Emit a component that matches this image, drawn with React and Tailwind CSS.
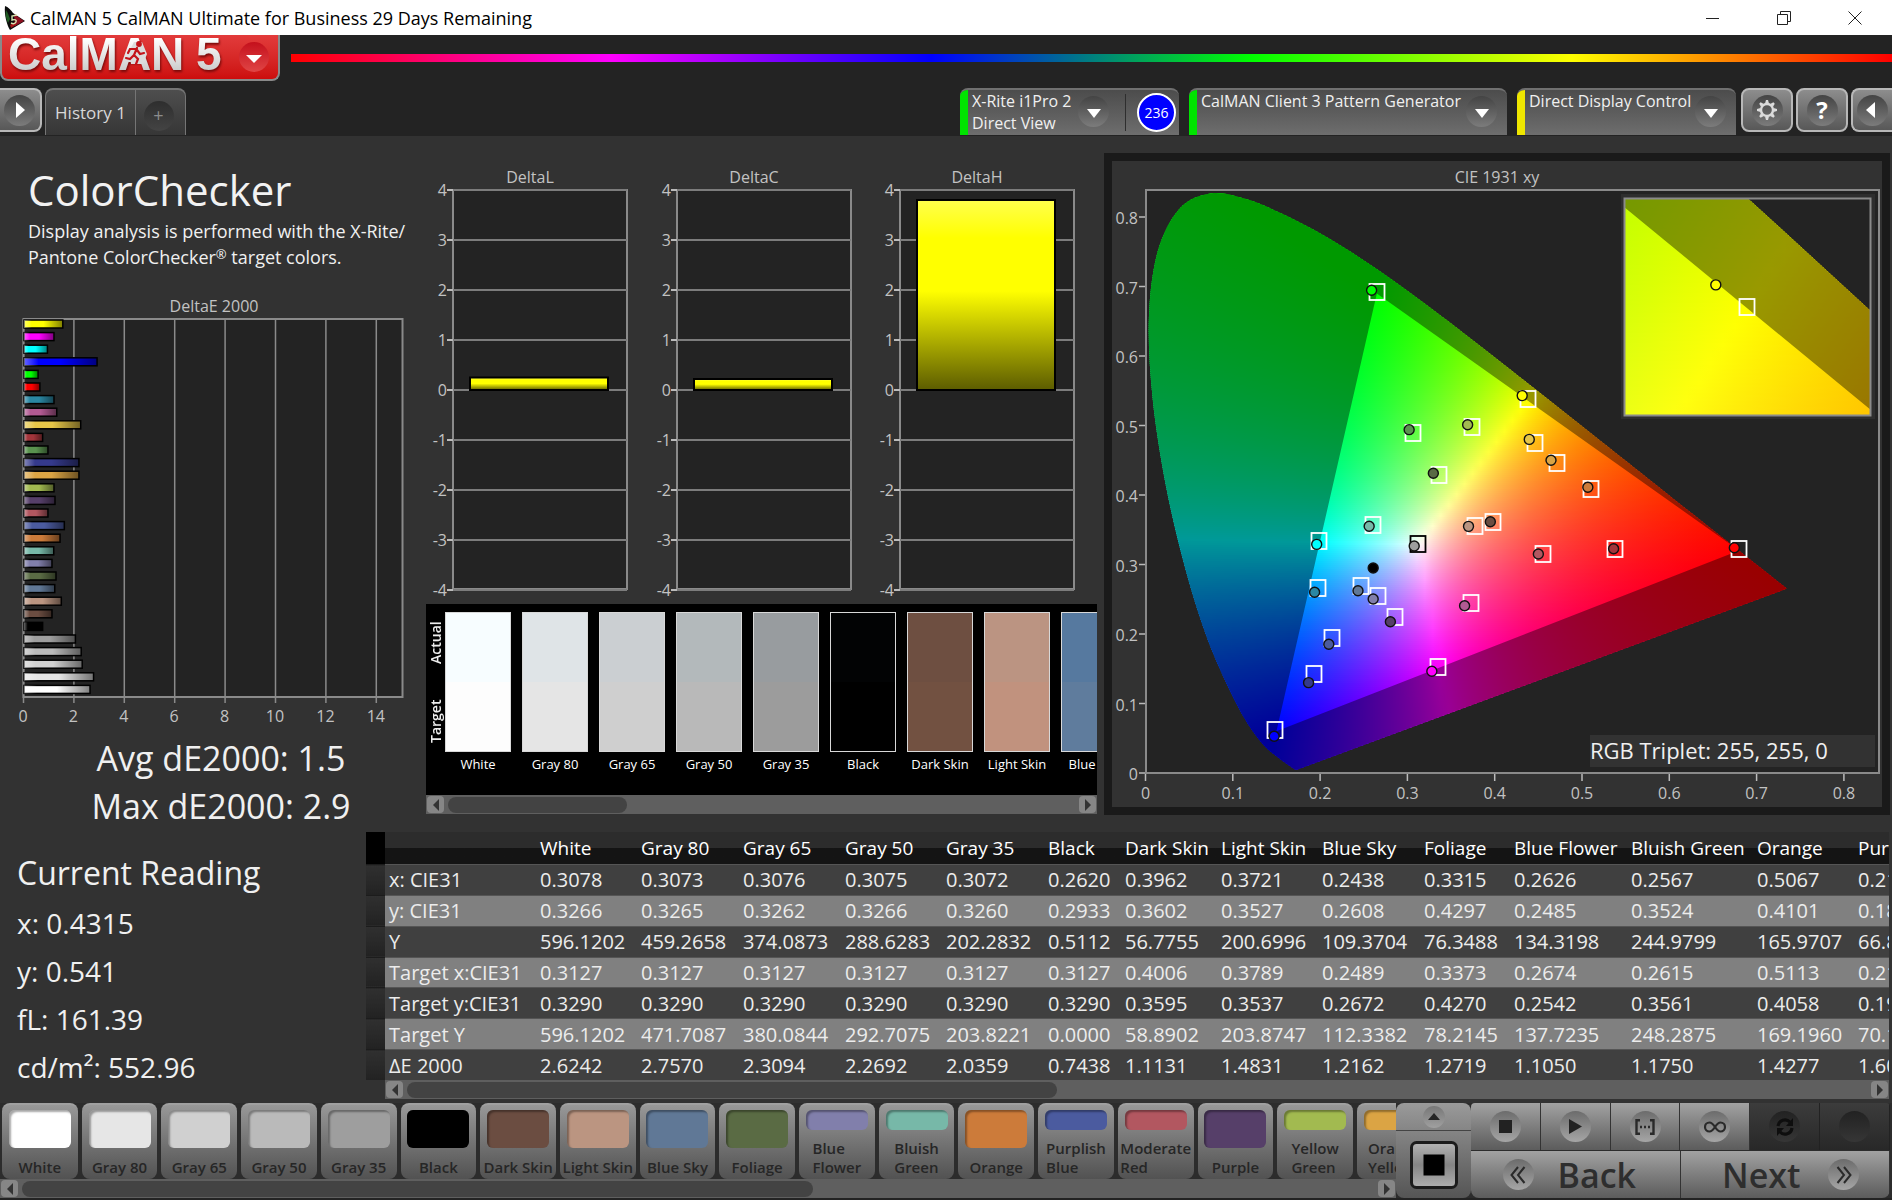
import { useMemo } from "react";

const PATCHES = [
  { name: "White", color: "#ffffff", actual: "#f7fdff", target: "#fdfdfd", de: 2.62 },
  { name: "Gray 80", color: "#e6e6e6", actual: "#dfe4e7", target: "#e5e5e5", de: 2.76 },
  { name: "Gray 65", color: "#d0d0d0", actual: "#cbcfd2", target: "#cfcfcf", de: 2.31 },
  { name: "Gray 50", color: "#bababa", actual: "#b3b9bb", target: "#b9b9b9", de: 2.27 },
  { name: "Gray 35", color: "#9e9e9e", actual: "#989c9f", target: "#9c9c9c", de: 2.04 },
  { name: "Black", color: "#000000", actual: "#020304", target: "#000000", de: 0.74 },
  { name: "Dark Skin", color: "#6b4d41", actual: "#6e4f41", target: "#725141", de: 1.11 },
  { name: "Light Skin", color: "#bb9581", actual: "#bb9482", target: "#c1927e", de: 1.48 },
  { name: "Blue Sky", color: "#607896", actual: "#56799f", target: "#5f7c9d", de: 1.22 },
  { name: "Foliage", color: "#5a6b44", de: 1.27 },
  { name: "Blue Flower", lines: ["Blue", "Flower"], color: "#817fab", de: 1.11 },
  { name: "Bluish Green", lines: ["Bluish", "Green"], color: "#77b8a8", de: 1.18 },
  { name: "Orange", color: "#cc7b3a", de: 1.43 },
  { name: "Purplish Blue", lines: ["Purplish", "Blue"], color: "#4b5b9f", de: 1.6 },
  { name: "Moderate Red", lines: ["Moderate", "Red"], color: "#b25760", de: 0.95 },
  { name: "Purple", color: "#563f69", de: 1.23 },
  { name: "Yellow Green", lines: ["Yellow", "Green"], color: "#a2ba50", de: 1.19 },
  { name: "Orange Yellow", lines: ["Orange", "Yellow"], color: "#dba444", de: 2.18 },
  { name: "Blue", color: "#353a8c", de: 2.18 },
  { name: "Green", color: "#5a934f", de: 0.95 },
  { name: "Red", color: "#a3353b", de: 0.74 },
  { name: "Yellow", color: "#e6c648", de: 2.25 },
  { name: "Magenta", color: "#b25a92", de: 1.3 },
  { name: "Cyan", color: "#2a87a3", de: 1.19 },
  { name: "100% Red", color: "#ff0000", de: 0.63 },
  { name: "100% Green", color: "#00ff00", de: 0.56 },
  { name: "100% Blue", color: "#0000ff", de: 2.9 },
  { name: "100% Cyan", color: "#00ffff", de: 0.93 },
  { name: "100% Magenta", color: "#ff00ff", de: 1.19 },
  { name: "100% Yellow", color: "#ffff00", de: 1.54 },
];

const COLUMNS = [
  ["White", "0.3078", "0.3266", "596.1202", "0.3127", "0.3290", "596.1202", "2.6242"],
  ["Gray 80", "0.3073", "0.3265", "459.2658", "0.3127", "0.3290", "471.7087", "2.7570"],
  ["Gray 65", "0.3076", "0.3262", "374.0873", "0.3127", "0.3290", "380.0844", "2.3094"],
  ["Gray 50", "0.3075", "0.3266", "288.6283", "0.3127", "0.3290", "292.7075", "2.2692"],
  ["Gray 35", "0.3072", "0.3260", "202.2832", "0.3127", "0.3290", "203.8221", "2.0359"],
  ["Black", "0.2620", "0.2933", "0.5112", "0.3127", "0.3290", "0.0000", "0.7438"],
  ["Dark Skin", "0.3962", "0.3602", "56.7755", "0.4006", "0.3595", "58.8902", "1.1131"],
  ["Light Skin", "0.3721", "0.3527", "200.6996", "0.3789", "0.3537", "203.8747", "1.4831"],
  ["Blue Sky", "0.2438", "0.2608", "109.3704", "0.2489", "0.2672", "112.3382", "1.2162"],
  ["Foliage", "0.3315", "0.4297", "76.3488", "0.3373", "0.4270", "78.2145", "1.2719"],
  ["Blue Flower", "0.2626", "0.2485", "134.3198", "0.2674", "0.2542", "137.7235", "1.1050"],
  ["Bluish Green", "0.2567", "0.3524", "244.9799", "0.2615", "0.3561", "248.2875", "1.1750"],
  ["Orange", "0.5067", "0.4101", "165.9707", "0.5113", "0.4058", "169.1960", "1.4277"],
  ["Purplish Blue", "0.2100", "0.1852", "66.8214", "0.2134", "0.1942", "70.1120", "1.6035"],
];
const COLUMN_WIDTHS = [
  "w-[101px]", "w-[102px]", "w-[102px]", "w-[101px]", "w-[102px]", "w-[77px]", "w-[96px]",
  "w-[101px]", "w-[102px]", "w-[90px]", "w-[117px]", "w-[126px]", "w-[101px]", "w-[130px]",
];
const ROW_LABELS = ["x: CIE31", "y: CIE31", "Y", "Target x:CIE31", "Target y:CIE31", "Target Y", "ΔE 2000"];

/* [actual x, actual y, target x, target y, fill] */
const MARKERS = [
  [0.259, 0.6945, 0.265, 0.692, "#00ff00"],
  [0.4315, 0.543, 0.438, 0.538, "#ffff00"],
  [0.302, 0.494, 0.3064, 0.4892, "#5a934f"],
  [0.369, 0.501, 0.374, 0.498, "#a2ba50"],
  [0.4396, 0.48, 0.4466, 0.4753, "#e6c648"],
  [0.4645, 0.45, 0.4714, 0.4456, "#dba444"],
  [0.3297, 0.4312, 0.3366, 0.4288, "#5a6b44"],
  [0.5067, 0.4111, 0.5103, 0.4082, "#cc7b3a"],
  [0.2562, 0.355, 0.2608, 0.3568, "#77b8a8"],
  [0.1961, 0.329, 0.199, 0.334, "#00ffff"],
  [0.37, 0.3549, 0.377, 0.3549, "#bb9581"],
  [0.395, 0.3615, 0.3985, 0.3615, "#6b4d41"],
  [0.45, 0.3151, 0.4553, 0.3156, "#b25760"],
  [0.5362, 0.3227, 0.5378, 0.3219, "#a3353b"],
  [0.6745, 0.3242, 0.68, 0.3223, "#ff0000"],
  [0.1937, 0.26, 0.1972, 0.2662, "#2a87a3"],
  [0.2434, 0.2623, 0.2468, 0.2691, "#607896"],
  [0.2608, 0.2504, 0.2667, 0.2547, "#817fab"],
  [0.2805, 0.2177, 0.2858, 0.2245, "#563f69"],
  [0.3655, 0.2407, 0.3731, 0.245, "#b25a92"],
  [0.21, 0.1852, 0.2134, 0.1942, "#4b5b9f"],
  [0.1868, 0.13, 0.1925, 0.143, "#353a8c"],
  [0.328, 0.1463, 0.335, 0.1525, "#ff00ff"],
  [0.1474, 0.0528, 0.148, 0.0623, "#0000ff"],
];

const LOCUS = [
  [0.1741, 0.005], [0.1714, 0.0051], [0.1689, 0.0069], [0.1644, 0.0109], [0.1566, 0.0177], [0.144, 0.0297],
  [0.1355, 0.0399], [0.1241, 0.0578], [0.1096, 0.0868], [0.0913, 0.1327], [0.0687, 0.2007], [0.0454, 0.295],
  [0.0235, 0.4127], [0.0082, 0.5384], [0.0039, 0.6548], [0.0139, 0.7502], [0.0389, 0.812], [0.0743, 0.8338],
  [0.1142, 0.8262], [0.1547, 0.8059], [0.1929, 0.7816], [0.2296, 0.7543], [0.2658, 0.7243], [0.3016, 0.6923],
  [0.3373, 0.6589], [0.3731, 0.6245], [0.4441, 0.5547], [0.5125, 0.4866], [0.5752, 0.4242], [0.627, 0.3725],
  [0.6915, 0.3083], [0.7347, 0.2653],
];
const GAMUT = [[0.68, 0.32], [0.265, 0.69], [0.15, 0.06]];

function chromaColor(x, y) {
  const X = x / y;
  const Z = (1 - x - y) / y;
  const rgb = [
    2.4935 * X - 0.9314 - 0.4027 * Z,
    -0.8295 * X + 1.7627 + 0.0236 * Z,
    0.0358 * X - 0.0762 + 0.9569 * Z,
  ].map((v) => Math.max(v, 0));
  const top = Math.max(...rgb);
  return `rgb(${rgb.map((v) => Math.round((v / top) * 255)).join(",")})`;
}

function strips(x0, x1, yTop, yBottom, count, stops) {
  return Array.from({ length: count }, (_, row) => {
    const y = yTop + ((yBottom - yTop) * (row + 0.5)) / count;
    const colors = Array.from({ length: stops + 1 }, (_, i) => chromaColor(x0 + ((x1 - x0) * i) / stops, Math.max(y, 0.001)));
    return `linear-gradient(to right, ${colors.join(",")})`;
  });
}

function smoothPath(pts) {
  let d = `M${pts[0][0]} ${pts[0][1]}`;
  for (let i = 0; i < pts.length - 1; i++) {
    const p0 = pts[Math.max(i - 1, 0)];
    const p1 = pts[i];
    const p2 = pts[i + 1];
    const p3 = pts[Math.min(i + 2, pts.length - 1)];
    d += `C${p1[0] + (p2[0] - p0[0]) / 6} ${p1[1] + (p2[1] - p0[1]) / 6} ${p2[0] - (p3[0] - p1[0]) / 6} ${p2[1] - (p3[1] - p1[1]) / 6} ${p2[0]} ${p2[1]}`;
  }
  return d + "Z";
}

function Scrollbar({ label, thumb }) {
  return (
    <div className="flex h-[19px] items-center bg-[#5f5f5f] p-px" role="group" aria-label={label}>
      <button aria-label="Scroll left" className="flex h-[17px] w-[17px] items-center justify-center rounded bg-[#868686]">
        <svg width="8" height="12" viewBox="0 0 8 12"><path d="M7 0v12L1 6z" fill="#333" /></svg>
      </button>
      <div className="mx-1 h-4 flex-1">
        <div className="h-4 rounded-full bg-[#434343]" style={{ width: `${thumb}%` }} />
      </div>
      <button aria-label="Scroll right" className="flex h-[17px] w-[17px] items-center justify-center rounded bg-[#868686]">
        <svg width="8" height="12" viewBox="0 0 8 12"><path d="M1 0v12l6-6z" fill="#333" /></svg>
      </button>
    </div>
  );
}

function TitleBar() {
  return (
    <div className="flex h-[35px] items-center bg-white pr-0.5 pl-1 text-[18px] text-black">
      <svg width="22" height="26" viewBox="0 0 22 26" className="shrink-0">
        <path d="M1 1C4 2 7 5 9 8l12 8L6 25C3 20 0 10 1 1z" fill="#0c0c0c" />
        <path d="M10 9l10 7-9 5z" fill="#8f1020" />
        <path d="M2 5c2 3 3 6 4 9l-2 4C2 14 1 9 2 5z" fill="#1f5a22" />
        <path d="M6 20l5-3 1 3-5 3z" fill="#a81418" />
        <path d="M13 10l-5 1v4c3-1 5 0 4 2s-3 2-5 1" fill="none" stroke="#d8e6b0" strokeWidth="1.4" />
      </svg>
      <span className="ml-1 flex-1 leading-6">CalMAN 5 CalMAN Ultimate for Business 29 Days Remaining</span>
      <button aria-label="Minimize" className="flex h-[35px] w-[71px] items-center justify-center">
        <svg width="14" height="14" viewBox="0 0 14 14"><path d="M0 7.5h13" stroke="#222" /></svg>
      </button>
      <button aria-label="Restore" className="flex h-[35px] w-[71px] items-center justify-center">
        <svg width="14" height="14" viewBox="0 0 14 14" fill="none" stroke="#222"><path d="M.5 3.5h10v10H.5zM3.500 3V.5h10v10H11" /></svg>
      </button>
      <button aria-label="Close" className="flex h-[35px] w-[71px] items-center justify-center">
        <svg width="14" height="14" viewBox="0 0 14 14" stroke="#222"><path d="M.5.5l13 13M13.500.5l-13 13" /></svg>
      </button>
    </div>
  );
}

function Brand() {
  return (
    <div className="flex h-[53px] items-start">
      <button aria-label="CalMAN 5 menu" className="flex h-[46px] w-[280px] shrink-0 rounded-b-lg border-x-2 border-b-2 border-[#8a8a8a] bg-linear-to-b from-[#e23b3b] to-[#cc0c0c]">
        <svg width="276" height="44" viewBox="0 0 276 44" className="shrink-0 overflow-visible">
          <defs>
            <linearGradient id="silver" x1="0" y1="0" x2="0" y2="1"><stop offset="0.2" stopColor="#fff" /><stop offset="1" stopColor="#bdbdbd" /></linearGradient>
            <linearGradient id="knob" x1="0" y1="0" x2="0" y2="1"><stop offset="0" stopColor="#c4101c" /><stop offset="1" stopColor="#e04545" /></linearGradient>
          </defs>
          <g fontFamily="'Liberation Sans',Arial,sans-serif" fontWeight="700" fontSize="46" fill="url(#silver)" className="[filter:drop-shadow(1px_2px_1px_#7a0a0a)]">
            <text x="6" y="35">CalMAN</text>
            <text x="194" y="35">5</text>
          </g>
          <path d="M127 17l5-10h8l5 12-4 10h-12z" fill="#dcdcdc" />
          <g fill="none" stroke="#c3141a" strokeWidth="2.200" strokeLinecap="round">
            <circle cx="137" cy="9" r="1.800" fill="#c3141a" />
            <path d="M135 13l-3 7 4 4-2 5M132 20l-4 4-4-1M134 14l-6 0-2 4M135 15l3 4 4-1" />
          </g>
          <circle cx="252" cy="22" r="15" fill="url(#knob)" />
          <path d="M244 20h16l-8 8z" fill="#fff" />
        </svg>
      </button>
      <div className="mt-[19px] ml-[11px] h-2 flex-1 bg-[linear-gradient(to_right,#f00,#f0f_20%,#00f_40%,#0f0_60%,#ff0_80%,#f00)]" />
    </div>
  );
}

function Knob({ children }) {
  return <span className="flex size-[31px] shrink-0 items-center justify-center rounded-full bg-linear-to-b from-[#444] to-[#7c7c7c]">{children}</span>;
}

const downArrow = <svg width="14" height="9" viewBox="0 0 14 9" className="mt-1"><path d="M0 0h14L7 9z" fill="#fff" /></svg>;

function Device({ lines, width, lamp, badge }) {
  return (
    <div className={`flex h-[47px] overflow-hidden rounded-t-lg border-t-2 border-[#707070] bg-linear-to-b from-[#4c4c4c] to-[#6e6e6e] ${width}`}>
      <div className={`w-2 shrink-0 ${lamp}`} />
      <button className={`flex flex-1 items-start pl-1 text-left text-[16px] leading-[22px] whitespace-nowrap text-[#f0f0f0] ${badge ? "pr-4" : "pr-2.5"}`}>
        <span className="flex-1">{lines.map((l) => <span key={l} className="block">{l}</span>)}</span>
        <span className="mt-1.5"><Knob>{downArrow}</Knob></span>
      </button>
      {badge && (
        <div className="my-1 flex w-[54px] items-center justify-center border-l border-[#2e2e2e] pl-2">
          <span className="flex size-[39px] items-center justify-center rounded-full border-2 border-white bg-[#0000ff] text-[14px] text-white">{badge}</span>
        </div>
      )}
    </div>
  );
}

const squareButton = "flex h-11 items-center justify-center rounded-lg border-2 border-[#b8b8b8] bg-linear-to-b from-[#8d8d8d] to-[#585858]";

function Tabs() {
  return (
    <div className="flex h-12 items-start">
      <button aria-label="Expand" className={`${squareButton} w-[42px] rounded-l-none border-l-0 pr-0.5`}>
        <Knob><svg width="9" height="16" viewBox="0 0 9 16" className="ml-0.5"><path d="M0 0l9 8-9 8z" fill="#fff" /></svg></Knob>
      </button>
      <div className="ml-[3px] flex h-[47px] w-[141px] overflow-hidden rounded-t-lg border-x border-t-2 border-[#757575] bg-linear-to-b from-[#4e4e4e] to-[#363636]">
        <button className="w-[90px] border-r border-[#757575] text-[17px] text-[#d8d8d8]">History 1</button>
        <button aria-label="Add tab" className="flex flex-1 items-center justify-center pr-1">
          <span className="mt-1.5 flex size-[30px] items-center justify-center rounded-full bg-linear-to-b from-[#2e2e2e] to-[#444] text-[18px] text-[#8c8c8c]">+</span>
        </button>
      </div>
      <div className="flex-1" />
      <Device lines={["X-Rite i1Pro 2", "Direct View"]} width="w-[219px]" lamp="bg-[#00e400]" badge="236" />
      <div className="w-2.5" />
      <Device lines={["CalMAN Client 3 Pattern Generator"]} width="w-[318px]" lamp="bg-[#00e400]" />
      <div className="w-2.5" />
      <Device lines={["Direct Display Control"]} width="w-[219px]" lamp="bg-[#efe600]" />
      <button aria-label="Settings" className={`${squareButton} ml-[5px] w-[52px]`}>
        <Knob>
          <svg width="22" height="22" viewBox="-11 -11 22 22">
            <circle r="6" fill="none" stroke="#dcdcdc" strokeWidth="2.400" />
            {[0, 45, 90, 135, 180, 225, 270, 315].map((a) => <path key={a} d="M-2-6.500l1-3.500h2l1 3.500z" fill="#dcdcdc" transform={`rotate(${a})`} />)}
          </svg>
        </Knob>
      </button>
      <button aria-label="Help" className={`${squareButton} ml-[3px] w-[52px]`}>
        <Knob><span className="text-[24px] leading-none font-bold text-white">?</span></Knob>
      </button>
      <button aria-label="Collapse" className={`${squareButton} ml-[3px] w-[41px] rounded-r-none border-r-0`}>
        <Knob><svg width="9" height="16" viewBox="0 0 9 16" className="mr-1"><path d="M9 0L0 8l9 8z" fill="#fff" /></svg></Knob>
      </button>
    </div>
  );
}

const chartFont = { fontFamily: "'Open Sans',sans-serif", fontSize: 16, fill: "#c2c2c2" };

function DeltaEChart() {
  const unit = 25.2;
  const bars = [...PATCHES].reverse();
  return (
    <svg viewBox="0 0 420 464" className="block w-full" role="img" aria-label="DeltaE 2000">
      <defs>
        <linearGradient id="sheenX">
          <stop offset="0" stopColor="#fff" stopOpacity="0.4" /><stop offset="0.2" stopColor="#fff" stopOpacity="0" />
          <stop offset="0.5" stopColor="#000" stopOpacity="0" /><stop offset="1" stopColor="#000" stopOpacity="0.5" />
        </linearGradient>
      </defs>
      <rect x="23.500" y="49" width="379" height="378" fill="#232323" stroke="#8a8a8a" strokeWidth="2" />
      {[0, 2, 4, 6, 8, 10, 12, 14].map((v) => (
        <g key={v}>
          <path d={`M${23.5 + v * unit} 49v384`} stroke="#8a8a8a" strokeWidth="1.500" />
          <text x={23 + v * unit} y="452" textAnchor="middle" {...chartFont}>{v}</text>
        </g>
      ))}
      {bars.map((b, i) => (
        <g key={b.name}>
          <rect x="24" y={50 + i * 12.6} width={b.de * unit} height="8" fill={b.color} stroke="#000" strokeWidth="1.500" />
          <rect x="24" y={50 + i * 12.6} width={b.de * unit} height="8" fill="url(#sheenX)" />
        </g>
      ))}
      <text x="214" y="42" textAnchor="middle" {...chartFont}>DeltaE 2000</text>
    </svg>
  );
}

function DeltaCharts() {
  const charts = [["DeltaL", 33, 0.25], ["DeltaC", 257, 0.22], ["DeltaH", 480, 3.8]];
  return (
    <svg viewBox="0 0 684 468" className="block w-full" role="img" aria-label="DeltaL, DeltaC and DeltaH">
      <defs>
        <linearGradient id="barY" x1="0" y1="0" x2="0" y2="1">
          <stop offset="0" stopColor="#ffff4d" /><stop offset="0.200" stopColor="#ffff00" />
          <stop offset="0.480" stopColor="#ffff00" /><stop offset="1" stopColor="#5c5c00" />
        </linearGradient>
      </defs>
      {charts.map(([name, x, value]) => (
        <g key={name}>
          <text x={x + 77} y="47" textAnchor="middle" {...chartFont}>{name}</text>
          <rect x={x} y="54" width="174" height="399" fill="#232323" stroke="#8a8a8a" strokeWidth="2" />
          {[4, 3, 2, 1, 0, -1, -2, -3, -4].map((v) => (
            <g key={v}>
              <path d={`M${x - 6} ${254 - v * 50}h180`} stroke="#7c7c7c" strokeWidth="2" />
              <path d={`M${x - 6} ${254 - v * 50}h6`} stroke="#bbb" strokeWidth="2" />
              <text x={x - 6} y={260 - v * 50} textAnchor="end" {...chartFont}>{v}</text>
            </g>
          ))}
          <rect x={x + 17} y={254 - value * 50} width="138" height={value * 50} fill="url(#barY)" stroke="#000" strokeWidth="2" />
        </g>
      ))}
    </svg>
  );
}

function PatchCompare() {
  return (
    <div className="mx-1.5 mr-[7px] overflow-hidden bg-black">
      <div className="flex h-[191px] overflow-hidden pt-2">
        <div className="flex w-[19px] shrink-0 flex-col text-[14px] leading-[19px] font-semibold text-[#eee]">
          <span className="flex h-[62px] rotate-180 items-center justify-center [writing-mode:vertical-rl]">Actual</span>
          <span className="mt-4 flex h-[62px] rotate-180 items-center justify-center [writing-mode:vertical-rl]">Target</span>
        </div>
        <ul className="flex gap-[11px]">
          {PATCHES.slice(0, 9).map((p) => (
            <li key={p.name} className="w-[66px] shrink-0 text-center text-[13px] whitespace-nowrap text-white">
              <div className="h-[140px] border border-[#d8d8d8]">
                <div className="h-1/2" style={{ background: p.actual }} />
                <div className="h-1/2" style={{ background: p.target }} />
              </div>
              <span className="block leading-6">{p.name}</span>
            </li>
          ))}
        </ul>
      </div>
      <Scrollbar label="Patches" thumb={28.5} />
    </div>
  );
}

function Target({ x, y, stroke = "#fff" }) {
  return <rect x={Math.round(x) - 7.5} y={Math.round(y) - 8} width="15" height="16" fill="none" stroke={stroke} strokeWidth="1.800" />;
}
function Dot({ x, y, fill }) {
  return <circle cx={x} cy={y} r="5" fill={fill} stroke="#111" strokeWidth="1.400" />;
}

function CieChart() {
  const px = (x) => 33.5 + 873 * x;
  const py = (y) => 612 - 695 * y;
  const ix = (x) => 635 + (x - 0.438) * 4800;
  const iy = (y) => 146 - (y - 0.536) * 4430;
  const main = useMemo(() => strips(0, 0.84, 0.84, 0, 292, 92), []);
  const inset = useMemo(() => strips(0.4125, 0.4635, 0.5605, 0.5115, 109, 20), []);
  const locus = smoothPath(LOCUS.map(([x, y]) => [px(x), py(y)]));
  const insetLocus = LOCUS.map(([x, y]) => `${ix(x)},${iy(y)}`).join(" ");
  const shade = (fx, fy, box) => `${box}M${GAMUT.map(([x, y]) => `${fx(x)} ${fy(y)}`).join("L")}Z`;
  return (
    <svg viewBox="0 0 770 646" className="block w-full bg-[#323232]" role="img" aria-label="CIE 1931 xy chromaticity chart">
      <defs>
        <clipPath id="locus"><path d={locus} /></clipPath>
        <clipPath id="insetBox"><rect x="513" y="38" width="245" height="216" /></clipPath>
        <clipPath id="insetLocus"><polygon points={insetLocus} /></clipPath>
      </defs>
      <text x="385" y="22" textAnchor="middle" {...chartFont}>CIE 1931 xy</text>
      <rect x="34" y="29" width="733" height="583" fill="#232323" stroke="#8a8a8a" strokeWidth="2" />
      <g clipPath="url(#locus)">
        <foreignObject x="33.500" y="28" width="733" height="585">
          {main.map((g, i) => <div key={i} className="-mb-px h-[3px]" style={{ background: g }} />)}
        </foreignObject>
        <path d={shade(px, py, "M0 0H770V646H0Z")} fillRule="evenodd" fill="#000" opacity="0.400" />
      </g>
      {[0, 1, 2, 3, 4, 5, 6, 7, 8].map((v) => (
        <g key={v}>
          <path d={`M${px(v / 10)} 613v7M27 ${py(v / 10)}h6`} stroke="#bbb" strokeWidth="1.500" />
          <text x={px(v / 10)} y="638" textAnchor="middle" {...chartFont}>{v / 10}</text>
          <text x="26" y={py(v / 10) + 7} textAnchor="end" {...chartFont}>{v / 10}</text>
        </g>
      ))}
      {MARKERS.map((m, i) => (
        <g key={i}><Target x={px(m[2])} y={py(m[3])} /><Dot x={px(m[0])} y={py(m[1])} fill={m[4]} /></g>
      ))}
      <Target x={px(0.3127)} y={py(0.329)} stroke="#000" />
      <Dot x={px(0.3078)} y={py(0.3266)} fill="#9e9e9e" />
      <Dot x={px(0.2608)} y={py(0.295)} fill="#000" />

      <rect x="509" y="33" width="254" height="225" fill="#2e2e2e" />
      <rect x="512" y="37" width="247" height="218" fill="#232323" />
      <g clipPath="url(#insetBox)">
        <g clipPath="url(#insetLocus)">
          <foreignObject x="513" y="38" width="245" height="220">
            {inset.map((g, i) => <div key={i} className="-mb-px h-[3px]" style={{ background: g }} />)}
          </foreignObject>
          <path d={shade(ix, iy, "M-4000-4000H6000V6000H-4000Z")} fillRule="evenodd" fill="#000" opacity="0.400" />
        </g>
      </g>
      <rect x="512.500" y="37.500" width="246" height="217" fill="none" stroke="#8a8a8a" strokeWidth="2" />
      <Dot x={ix(0.4315)} y={iy(0.541)} fill="#ffff00" />
      <Target x={ix(0.438)} y={iy(0.536)} />

      <rect x="478" y="574" width="285" height="32" fill="#323232" />
      <text x="478" y="598" fontFamily="'Open Sans',sans-serif" fontSize="22" fill="#f0f0f0">RGB Triplet: 255, 255, 0</text>
    </svg>
  );
}

function ReadingTable() {
  return (
    <div className="mr-[3px] min-w-0 overflow-hidden">
      <div className="overflow-hidden">
        <table className="h-[248px] w-[1617px] table-fixed border-collapse text-left text-[20px] whitespace-nowrap text-[#ececec]">
          <colgroup>
            <col className="w-[19px]" /><col className="w-[150px]" />
            {COLUMN_WIDTHS.map((w, i) => <col key={i} className={w} />)}
          </colgroup>
          <thead>
            <tr className="h-8 text-[19px] text-white">
              <td className="bg-black" />
              <td className="bg-linear-to-b from-[#2c2c2c] from-50% to-[#141414] to-50%" />
              {COLUMNS.map((c) => (
                <th key={c[0]} scope="col" className="bg-linear-to-b from-[#2c2c2c] from-50% to-[#141414] to-50% py-0 pl-[5px] leading-8 font-normal">{c[0]}</th>
              ))}
            </tr>
          </thead>
          <tbody>
            {ROW_LABELS.map((label, r) => (
              <tr key={label} className="border-t border-[#555] odd:bg-[#404040] even:bg-[#808080]">
                <td className="border-t border-[#1c1c1c] bg-linear-to-b from-[#303030] to-[#222] p-0" />
                <th scope="row" className="py-0 pl-1 leading-[29px] font-normal">{label}</th>
                {COLUMNS.map((c) => <td key={c[0]} className="py-0 pl-[5px] leading-[29px]">{c[r + 1]}</td>)}
              </tr>
            ))}
          </tbody>
        </table>
      </div>
      <div className="ml-[19px]"><Scrollbar label="Readings" thumb={44.5} /></div>
    </div>
  );
}

function PatchBar() {
  return (
    <div className="min-w-0 overflow-hidden bg-[#2c2c2c]">
      <div className="flex h-[76px] overflow-hidden">
        {PATCHES.slice(0, 18).map((p) => (
          <div key={p.name} className="w-[5.71%] shrink-0 px-0.5">
            <button className="flex h-[76px] w-full flex-col items-center justify-between overflow-hidden rounded-lg border-t-2 border-[#a0a0a0] bg-linear-to-b from-[#989898] to-[#525252] pt-[5px] pb-0.5 text-[15px] leading-[19px] font-semibold whitespace-nowrap text-[#262626]">
              <span
                className={`w-[62px] shrink-0 rounded-md shadow-[inset_2px_2px_2px_rgba(0,0,0,0.35)] ${p.lines ? "h-[20px]" : "h-[38px]"}`}
                style={{ background: p.color }}
              />
              <span className="text-left">{(p.lines ?? [p.name]).map((l) => <span key={l} className="block">{l}</span>)}</span>
            </button>
          </div>
        ))}
      </div>
      <Scrollbar label="Patch buttons" thumb={58.5} />
    </div>
  );
}

function Bubble({ children, dark }) {
  return <span className={`flex size-[31px] shrink-0 items-center justify-center rounded-full bg-linear-to-b ${dark ? "from-[#222] to-[#363636]" : "from-[#6c6c6c] to-[#a6a6a6]"}`}>{children}</span>;
}

const key = "flex flex-1 items-center justify-center border-r border-[#333] bg-linear-to-b from-[#a2a2a2] to-[#5c5c5c]";
const darkKey = "flex flex-1 items-center justify-center border-r border-[#222] bg-linear-to-b from-[#3c3c3c] to-[#282828]";

function Transport() {
  return (
    <div className="flex">
      <div className="flex w-[75px] flex-col rounded-lg bg-linear-to-b from-[#9a9a9a] to-[#555]">
        <button aria-label="Show more" className="flex h-7 items-center justify-center border-b border-[#444]">
          <span className="flex size-[22px] items-center justify-center rounded-full bg-linear-to-b from-[#777] to-[#a0a0a0]">
            <svg width="12" height="7" viewBox="0 0 12 7"><path d="M0 7h12L6 0z" fill="#262626" /></svg>
          </span>
        </button>
        <button aria-label="Pattern window" className="flex flex-1 items-center justify-center">
          <svg width="50" height="50" viewBox="0 0 50 50">
            <defs><linearGradient id="frame" x1="0" y1="0" x2="0" y2="1"><stop offset="0" stopColor="#b5b5b5" /><stop offset="0.500" stopColor="#858585" /><stop offset="1" stopColor="#b0b0b0" /></linearGradient></defs>
            <rect x="2.500" y="2.500" width="45" height="45" rx="5" fill="url(#frame)" stroke="#1c1c1c" strokeWidth="3" />
            <rect x="14.500" y="14.500" width="21" height="21" fill="#000" />
          </svg>
        </button>
      </div>
      <div className="flex min-w-0 flex-1 flex-col gap-px pr-0.5">
        <div className="flex h-[47px] overflow-hidden rounded-t">
          <button aria-label="Stop" className={key}><Bubble><svg width="13" height="13" viewBox="0 0 13 13"><path d="M0 0h13v13H0z" fill="#222" /></svg></Bubble></button>
          <button aria-label="Play" className={key}><Bubble><svg width="13" height="15" viewBox="0 0 13 15"><path d="M0 0l13 7.500L0 15z" fill="#222" /></svg></Bubble></button>
          <button aria-label="Read series" className={key}>
            <Bubble><svg width="20" height="16" viewBox="0 0 20 16" fill="none" stroke="#2a2a2a" strokeWidth="2.400"><path d="M5 1.200H1.500v13.600H5M15 1.200h3.500v13.600H15" /><path d="M5 8h11" strokeDasharray="2 2" /></svg></Bubble>
          </button>
          <button aria-label="Read continuously" className={key}>
            <Bubble><svg width="22" height="12" viewBox="0 0 22 12" fill="none" stroke="#2a2a2a" strokeWidth="2.200"><path d="M11 6C9 3 7.500 1.500 5.500 1.500a4.500 4.500 0 0 0 0 9C7.500 10.500 9 9 11 6s3.500-4.500 5.500-4.500a4.500 4.500 0 0 1 0 9C14.500 10.500 13 9 11 6z" /></svg></Bubble>
          </button>
          <button aria-label="Refresh" disabled className={darkKey}>
            <Bubble dark><svg width="18" height="20" viewBox="0 0 18 20"><path d="M2 9a7 7 0 0 1 12-4M16 11a7 7 0 0 1-12 4" fill="none" stroke="#0e0e0e" strokeWidth="3.200" /><path d="M17 1v8H10zM1 19v-8h7z" fill="#0e0e0e" /></svg></Bubble>
          </button>
          <button aria-label="Record" disabled className={darkKey}><Bubble dark /></button>
        </div>
        <div className="flex h-[47px] overflow-hidden rounded-b-lg text-[34px] leading-[44px] font-semibold text-[#2e2e2e]">
          <button className={`${key} gap-6 pr-3`}>
            <Bubble><svg width="16" height="18" viewBox="0 0 16 18" fill="none" stroke="#2a2a2a" strokeWidth="2"><path d="M8 1L1.500 9 8 17M14.500 1L8 9l6.500 8" /></svg></Bubble>
            <span>Back</span>
          </button>
          <button className={`${key} gap-7 pl-3`}>
            <span>Next</span>
            <Bubble><svg width="16" height="18" viewBox="0 0 16 18" fill="none" stroke="#2a2a2a" strokeWidth="2"><path d="M1.500 1L8 9l-6.500 8M8 1l6.500 8L8 17" /></svg></Bubble>
          </button>
        </div>
      </div>
    </div>
  );
}

export default function App() {
  return (
    <div className="min-h-screen overflow-hidden bg-[#232323] font-['Open_Sans','Noto_Sans',sans-serif]">
      <TitleBar />
      <header>
        <Brand />
        <Tabs />
      </header>
      <main className="bg-[#323232]">
        <div className="grid grid-cols-[420fr_684fr_788fr]">
          <section className="min-w-0">
            <h1 className="pt-[26px] pl-7 text-[42px] leading-[56px] text-[#f2f2f2]">ColorChecker</h1>
            <p className="pl-7 text-[18px] leading-[26px] whitespace-nowrap text-[#f0f0f0]">
              Display analysis is performed with the X-Rite/<br />
              Pantone ColorChecker<span className="align-top text-[13px] leading-5">®</span> target colors.
            </p>
            <DeltaEChart />
            <div className="pl-[22px] text-center text-[34px] leading-[48px] text-[#f0f0f0]">
              <p>Avg dE2000: 1.5</p>
              <p>Max dE2000: 2.9</p>
            </div>
          </section>
          <section className="min-w-0">
            <DeltaCharts />
            <PatchCompare />
          </section>
          <section className="mt-[17px] mr-0.5 min-w-0 self-start bg-[#1a1a1a] p-2">
            <CieChart />
          </section>
        </div>
        <div className="grid grid-cols-[366fr_1526fr] pt-0.5 pb-1">
          <section className="pt-[19px] pl-[17px] text-[#f0f0f0]">
            <h2 className="text-[32px] leading-[44px]">Current Reading</h2>
            <div className="pt-1 text-[28px] leading-[48px]">
              <p>x: 0.4315</p>
              <p>y: 0.541</p>
              <p>fL: 161.39</p>
              <p>cd/m²: 552.96</p>
            </div>
          </section>
          <ReadingTable />
        </div>
      </main>
      <footer className="grid grid-cols-[1396fr_496fr] bg-[#2c2c2c]">
        <PatchBar />
        <Transport />
      </footer>
    </div>
  );
}
